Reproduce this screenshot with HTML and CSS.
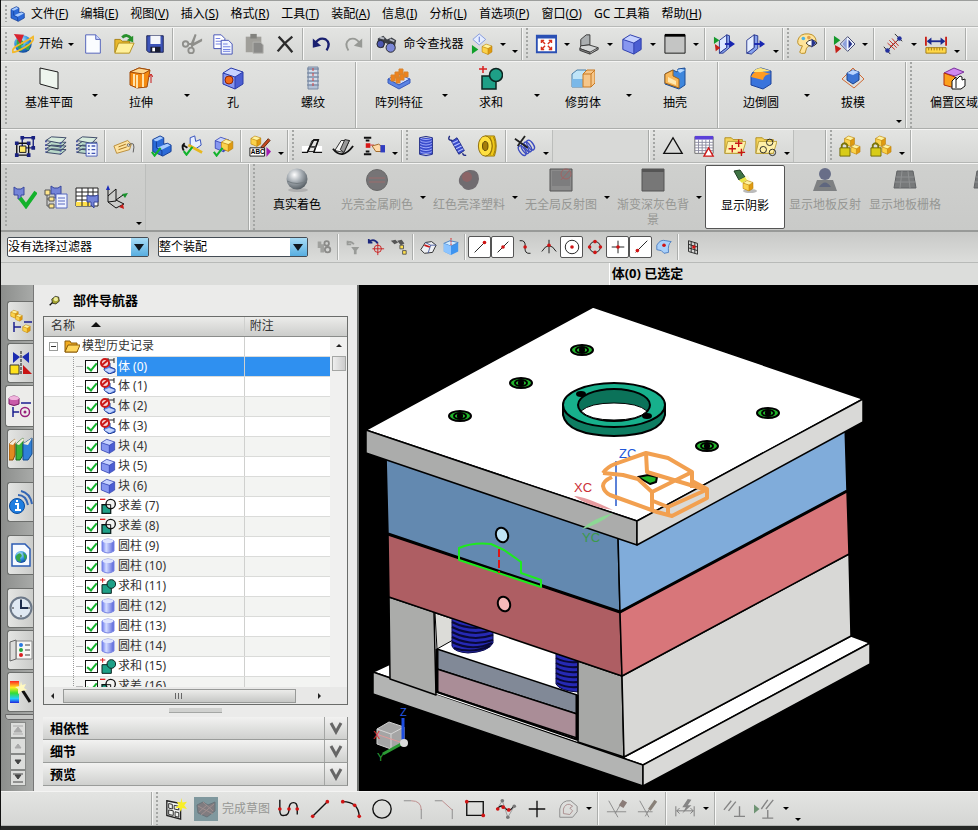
FILE: index.html
```
<!DOCTYPE html>
<html lang="zh-CN">
<head>
    <meta charset="UTF-8">
    <meta name="viewport" content="width=device-width, initial-scale=1.0">
    <title>部件导航器</title>
    <link rel="stylesheet" href="styles.css">
</head>
<body>
    <svg class="sprite" xmlns="http://www.w3.org/2000/svg" aria-hidden="true">
        <defs>
            <linearGradient id="g-blue" x1="0" y1="0" x2="1" y2="1"><stop offset="0" stop-color="#b8ccff"/><stop offset="1" stop-color="#3c55c8"/></linearGradient>
            <linearGradient id="g-cyl" x1="0" y1="0" x2="1" y2="0"><stop offset="0" stop-color="#6a78ee"/><stop offset=".35" stop-color="#d4dcff"/><stop offset="1" stop-color="#5562d8"/></linearGradient>
            <linearGradient id="g-rainbow" x1="0" y1="0" x2="0" y2="1"><stop offset="0" stop-color="#f22"/><stop offset=".3" stop-color="#fe2"/><stop offset=".55" stop-color="#3d3"/><stop offset=".8" stop-color="#2cf"/><stop offset="1" stop-color="#22d"/></linearGradient>
            <radialGradient id="g-ball" cx=".38" cy=".3" r=".7"><stop offset="0" stop-color="#fff"/><stop offset=".5" stop-color="#a5acb2"/><stop offset="1" stop-color="#5a6268"/></radialGradient>
            <radialGradient id="g-globe" cx=".4" cy=".3" r=".7"><stop offset="0" stop-color="#c8f0ff"/><stop offset=".6" stop-color="#2b8fe0"/><stop offset="1" stop-color="#114a9c"/></radialGradient>
        </defs>
        <symbol id="cube" viewBox="0 0 24 24"><path d="M2 7l8-5 12 4v12l-8 5-12-5z" fill="#4b5ed2"/><path d="M2 7l8-5 12 4-8 5z" fill="#c6d2ff"/><path d="M2 7l12 4v12L2 18z" fill="#8797f0"/><path d="M2 7l8-5 12 4v12l-8 5-12-5zM2 7l12 4 8-5M14 11v12" fill="none" stroke="#2c3caa"/></symbol>
        <symbol id="gold" viewBox="0 0 24 24"><path d="M2 7l8-5 12 4v12l-8 5-12-5z" fill="#e09a10"/><path d="M2 7l8-5 12 4-8 5z" fill="#fff3a0"/><path d="M2 7l12 4v12L2 18z" fill="#fbd24a"/><path d="M2 7l8-5 12 4v12l-8 5-12-5zM2 7l12 4 8-5M14 11v12" fill="none" stroke="#b07a08"/></symbol>
        <symbol id="tick" viewBox="0 0 24 24"><path d="M3 13l6 8L22 4" fill="none" stroke="#12b32c" stroke-width="4.500"/></symbol>
        <symbol id="part" viewBox="0 0 24 24"><path d="M3 5l8-4 4 2v7l4-1 4 2v7l-9 5L3 18z" fill="#2c6bd8"/><path d="M3 5l8-4 4 2-8 4zM8 14l11-5 4 2-10 5z" fill="#a8ccff"/><path d="M3 5l8-4 4 2v7l4-1 4 2v7l-9 5L3 18zM7 7v7l6 3v6" fill="none" stroke="#123a92"/></symbol>
        <symbol id="globe" viewBox="0 0 24 24"><circle cx="12" cy="12" r="9.500" fill="url(#g-globe)"/><path d="M5 8q5-3 7 1t-2 5l1 6Q4 17 5 8zM15 12l5 1-2 6-4-2z" fill="#37a64a"/><path d="M1 21q-2-4 8-9T23 4q2 5-8 11T1 21z" fill="none" stroke="#f3b92b" stroke-width="2"/><path d="M2 1l11 1-4 10z" fill="#d82430"/></symbol>
        <symbol id="new" viewBox="0 0 24 24"><path d="M4 2h11l5 5v15H4z" fill="#fafcff" stroke="#4a5bb8"/><path d="M15 2v5h5" fill="#cdd8ff" stroke="#4a5bb8"/></symbol>
        <symbol id="open" viewBox="0 0 24 24"><path d="M2 7h6l2 2h8v12H2z" fill="#e8b82c" stroke="#a58010"/><path d="M6 11h17l-5 11H2z" fill="#fff09a" stroke="#b08c18"/><path d="M10 5q5-5 10 1" fill="none" stroke="#27902c" stroke-width="3"/><path d="M22 3v7l-7-2z" fill="#27902c"/></symbol>
        <symbol id="save" viewBox="0 0 24 24"><path d="M3 3h18v18H5l-2-2z" fill="#3d54b8" stroke="#18204e"/><path d="M7 3h11v9H7z" fill="#f4f6fa"/><path d="M7 15h11v6H7z" fill="#181c30"/><path d="M9 16h3v4H9z" fill="#fff"/></symbol>
        <symbol id="cut" viewBox="0 0 24 24"><path d="M10 13L15 1l2 1-4 12zM11 12L23 6v3l-11 6z" fill="#8f8f8b"/><circle cx="5" cy="12" r="3" fill="none" stroke="#8f8f8b" stroke-width="2"/><circle cx="11" cy="19" r="3" fill="none" stroke="#8f8f8b" stroke-width="2"/><path d="M8 12h4v4" fill="none" stroke="#8f8f8b" stroke-width="2"/></symbol>
        <symbol id="copy" viewBox="0 0 24 24"><path d="M2 2h8l4 4v11H2z" fill="#fff" stroke="#3d4cb4"/><path d="M4 6h5M4 9h8M4 12h8" stroke="#6a7ae0"/><path d="M10 8h8l4 4v11H10z" fill="#f2f5ff" stroke="#3d4cb4"/><path d="M12 12h5M12 15h8M12 18h8M12 20h8" stroke="#6a7ae0"/></symbol>
        <symbol id="paste" viewBox="0 0 24 24"><path d="M3 4h17v17H3z" fill="#a09f9a"/><path d="M8 1h7v5H8z" fill="#82827e"/><path d="M11 10h8l3 3v9H11z" fill="#8a8a88" stroke="#b4b4b0"/></symbol>
        <symbol id="del" viewBox="0 0 24 24"><path d="M5 4q6 6 15 17M20 4Q11 11 4 20" fill="none" stroke="#2c2c2c" stroke-width="2.500"/></symbol>
        <symbol id="undo" viewBox="0 0 24 24"><path d="M4 12q5-8 12-5 6 4 1 12" fill="none" stroke="#1a2070" stroke-width="2.500"/><path d="M2 6v10l9-2z" fill="#1a2070"/></symbol>
        <symbol id="redo" viewBox="0 0 24 24"><path d="M20 12Q15 4 8 7q-6 4-1 12" fill="none" stroke="#979995" stroke-width="2"/><path d="M22 6v10l-9-2z" fill="#979995"/></symbol>
        <symbol id="find" viewBox="0 0 24 24"><path d="M2 6l6-3 4 4 5-2 5 3-2 10-6 2-1-8-3-1-2 5-6-1z" fill="#3c3f46"/><circle cx="5" cy="12" r="4" fill="#4d58b0" stroke="#222"/><circle cx="16" cy="16" r="5" fill="#7c88d8" stroke="#222"/><path d="M4 5l5 1M15 7l5 2" stroke="#b8bcc4" stroke-width="2"/></symbol>
        <symbol id="play" viewBox="0 0 24 24"><path d="M9 1l7 6-7 6-7-6z" fill="#e5edff" stroke="#8096dc"/><path d="M9 4v6" stroke="#5570d0"/><path d="M1 13l7 5-7 5z" fill="#11a02a"/><use href="#gold" x="11" y="11" width="13" height="13"/></symbol>
        <symbol id="fit" viewBox="0 0 24 24"><path d="M2 3h21v18H2z" fill="#fff" stroke="#2b50b4" stroke-width="2"/><path d="M2 3h21v3H2z" fill="#2b50b4"/><path d="M11 12L7 8m0 3V8h3M14 12l4-4m-3 0h3v3M11 14l-4 4m0-3v3h3M14 14l4 4m-3 0h3v-3" fill="none" stroke="#d8301c" stroke-width="1.500"/></symbol>
        <symbol id="view" viewBox="0 0 24 24"><path d="M3 14V7l6-5h4v11z" fill="#aaaeb0" stroke="#333"/><path d="M3 14l9-1 10 3-9 5-11-4z" fill="#d4d6d6" stroke="#333"/><path d="M2 17l11 4v2L2 19zM22 16v2l-9 5" fill="#888" stroke="#333"/></symbol>
        <symbol id="bg" viewBox="0 0 24 24"><path d="M1 2h22v20H1z" fill="#c4c5c4" stroke="#111"/><path d="M1 1h22v3H1z" fill="#000"/></symbol>
        <symbol id="clip1" viewBox="0 0 24 24"><path d="M7 8l8-6v14l-8 6z" fill="#dce8ff" stroke="#26348c"/><path d="M15 2l3 1v13l-7 6H7l8-6z" fill="#86a2ee" stroke="#26348c"/><path d="M1 4l6 4-6 4z" fill="#15992c"/><path d="M2 12l6 4-5 4z" fill="#c42018"/><path d="M13 12h6" stroke="#1725b0" stroke-width="2"/><path d="M18 8l6 4-6 4z" fill="#1725b0"/></symbol>
        <symbol id="clip2" viewBox="0 0 24 24"><path d="M11 2l4 1v14l-7 6-5-1 8-6z" fill="#86a2ee" stroke="#26348c"/><path d="M3 8l8-6v14l-8 6z" fill="#e6efff" stroke="#26348c"/><path d="M11 12h7" stroke="#1725b0" stroke-width="2"/><path d="M17 8l6 4-6 4z" fill="#1725b0"/></symbol>
        <symbol id="palette" viewBox="0 0 24 24"><path d="M2 8q2-8 12-7 8 1 8 9-1 5-8 4-3 1-4 8-5 1-6-1l3-7q-6 0-5-6z" fill="#ffe49a" stroke="#b88a1c"/><circle cx="8" cy="6" r="2" fill="#4ab4e8"/><circle cx="14" cy="5" r="2" fill="#e0a04a"/><path d="M11 11q6-7 12 0-6 7-12 0z" fill="#fff" stroke="#222"/><path d="M17 6l5 5-5 5z" fill="#26348c"/></symbol>
        <symbol id="eye" viewBox="0 0 24 24"><path d="M1 3l7 5-7 5z" fill="#15992c"/><path d="M2 13l7 4-6 5z" fill="#c42018"/><path d="M16 4l8 8-8 8-8-8z" fill="#f0f4ff" stroke="#333a66"/><path d="M15 6v12l-5-6z" fill="#8da0dc"/><path d="M17 7l4 5-4 5z" fill="#26348c"/></symbol>
        <symbol id="meas" viewBox="0 0 24 24"><path d="M2 15l7 8M14 1l8 8M5 20L20 5" stroke="#222"/><path d="M6 11l8 7M8 8l8 8M11 6l7 8M9 15l7-6" stroke="#c8261c"/><circle cx="6" cy="19" r="2.500" fill="#23309c"/><circle cx="19" cy="6" r="2.500" fill="#23309c"/></symbol>
        <symbol id="ruler" viewBox="0 0 24 24"><path d="M1 4v10M23 4v10" stroke="#c82018" stroke-width="2"/><path d="M3 9h18" stroke="#1b2a90" stroke-width="2"/><path d="M7 5L2 9l5 4zM17 5l5 4-5 4z" fill="#1b2a90"/><path d="M1 16h22v6H1z" fill="#ffd848" stroke="#a07812"/><path d="M4 16v3M7 16v3M10 16v3M13 16v3M16 16v3M19 16v3" stroke="#a07812"/></symbol>

        <symbol id="plane" viewBox="0 0 24 24"><path d="M3 2l18 4v17L3 18z" fill="#eef5ee" stroke="#1c1c1c"/></symbol>
        <symbol id="extrude" viewBox="0 0 24 24"><path d="M1 6l9-4 11 2-3 17-10 1-7-3z" fill="#f48a10" stroke="#a04a08"/><path d="M1 6l9-4 11 2-7 4z" fill="#ffd68c" stroke="#a04a08"/><path d="M5 8v12M8 9v13M14 8v13" stroke="#ffe2a8" stroke-width="2"/><path d="M22 9v8M20 11l2-3 2 3" fill="none" stroke="#c81818"/></symbol>
        <symbol id="hole" viewBox="0 0 24 24"><use href="#cube"/><circle cx="8" cy="14" r="4" fill="#f26a18" stroke="#8c2408"/></symbol>
        <symbol id="thread" viewBox="0 0 24 24"><path d="M7 1h10v22H7z" fill="#b4c2d6" stroke="#7c8ca4"/><path d="M6 3h12M6 7h12M6 11h12M6 15h12M6 19h12" stroke="#6c7e9a"/><path d="M8 5h8M8 9h8M8 13h8M8 17h8" stroke="#eef4fc"/><path d="M12 2v20" stroke="#d04040" stroke-dasharray="3 2"/></symbol>
        <symbol id="pattern" viewBox="0 0 24 24"><path d="M1 13l10-5 12 5-11 6z" fill="#cfdfff" stroke="#3a5cbc"/><path d="M1 13v4l11 6 11-6v-4l-11 6z" fill="#5b84e4" stroke="#3a5cbc"/><path d="M4 9h4v6H4zM9 11h4v6H9zM8 6h4v6H8zM13 8h4v6h-4zM12 3h4v5h-4zM17 6h4v5h-4z" fill="#f0821c" stroke="#d8842c"/></symbol>
        <symbol id="unite" viewBox="0 0 24 24"><path d="M3 10h14v13H3z" fill="#1ea087" stroke="#0d2420" stroke-width="1.500"/><circle cx="17" cy="9" r="6.500" fill="#1ea087" stroke="#0d2420" stroke-width="1.500"/><path d="M4 0v7M0 3h8" stroke="#d82020" stroke-width="1.500"/></symbol>
        <symbol id="minus" viewBox="0 0 24 24"><path d="M3 10h13v13H3z" fill="#1ea087" stroke="#0d2420" stroke-width="2"/><circle cx="16" cy="9" r="7" fill="#f4f4f2" stroke="#111" stroke-width="2"/><path d="M3 10h13v8" fill="none" stroke="#111" stroke-width="1.500"/><path d="M0 2h8" stroke="#d82020" stroke-width="2"/></symbol>
        <symbol id="trim" viewBox="0 0 24 24"><path d="M1 8l5-4h9v14l-3 3H1z" fill="#bfe4f8" stroke="#4a7ea8"/><path d="M1 13h11v8H1z" fill="#7ab8e8"/><path d="M12 8l4-4h8v13l-4 4h-8z" fill="#f5c68a" stroke="#c87820"/><path d="M12 8h8v13M20 8l4-4" fill="none" stroke="#c87820"/></symbol>
        <symbol id="shell" viewBox="0 0 24 24"><path d="M2 8l8-4 4 2 1-3 7-1v17l-6 4L2 18z" fill="#3e86dc" stroke="#1c4c94"/><path d="M14 4l4-1 4 1-5 3z" fill="#b4d8ff"/><path d="M2 8l8-4v6l6 3v9L2 17z" fill="#f8b85a" stroke="#a86410"/><path d="M5 11l8 4v4l-8-3z" fill="#ffe8b0"/></symbol>
        <symbol id="blend" viewBox="0 0 24 24"><path d="M2 10q2-7 10-8l10 3v13l-8 5-12-4z" fill="#3a74dc" stroke="#1c439c"/><path d="M2 11q2-6 9-6l11 3q-7 0-8 6z" fill="#ff9c20"/><path d="M4 6q3-4 8-4l10 3-11 1z" fill="#ffe678"/></symbol>
        <symbol id="draft" viewBox="0 0 24 24"><path d="M12 2L1 13l12 9 10-9z" fill="none" stroke="#d06a34"/><path d="M6 7l6-3 6 2v8l-6 4-6-4z" fill="#3c74d4" stroke="#1a428c"/><path d="M6 7l6-3 6 2-6 3z" fill="#b8d4ff"/></symbol>
        <symbol id="offset" viewBox="0 0 24 24"><path d="M2 7l10-5 10 4-9 4z" fill="#d088f0" stroke="#7a309c"/><path d="M2 7l11 4v11L2 19z" fill="#fba01c" stroke="#b02c0c"/><path d="M10 15l4-4v3l4-4 2 1v3l3-1v7l-4 3h-9z" fill="#fff" stroke="#111"/><path d="M14 14v8" stroke="#111"/></symbol>

        <symbol id="node" viewBox="0 0 24 24"><path d="M9 3h12v11H9z" fill="none" stroke="#1a2280" stroke-width="1.500"/><path d="M3 9h13v13H3z" fill="none" stroke="#111" stroke-width="1.500"/><path d="M6 12h7v7H6z" fill="#ffe96a" stroke="#111"/><path d="M7 1h4v4H7zM19 1h4v4h-4zM19 12h4v4h-4zM1 7h4v4H1zM14 7h4v4h-4zM1 20h4v4H1zM14 20h4v4h-4z" fill="#1a2280"/></symbol>
        <symbol id="layers" viewBox="0 0 24 24"><path d="M1 19l6-4 16 1-6 5zM1 15l6-4 16 1-6 5zM1 11l6-4 16 1-6 5z" fill="#b8d8c8" stroke="#333f60"/><path d="M1 6l6-4 16 1-6 6z" fill="#d8ecde" stroke="#333f60"/><path d="M1 6v13M17 8v13" stroke="#4a54a0" stroke-width="2" stroke-dasharray="2 2"/></symbol>
        <symbol id="layset" viewBox="0 0 24 24"><use href="#layers"/><path d="M11 9h12v14H11z" fill="#f2f6ff" stroke="#4456b4"/><path d="M13 12h2M13 16h2M13 20h2M17 12h4M17 16h4M17 20h4" stroke="#4456b4" stroke-width="1.500"/></symbol>
        <symbol id="tag" viewBox="0 0 24 24"><path d="M1 12l15-6 4 4-2 6-14 4z" fill="#ffe3a0" stroke="#b88a34"/><path d="M6 13l8-3M6 16l9-3" stroke="#a06c18"/><circle cx="17" cy="11" r="1.500" fill="#fff" stroke="#666"/><path d="M17 11q8-6 5 8" fill="none" stroke="#555"/></symbol>
        <symbol id="chk1" viewBox="0 0 24 24"><use href="#part"/><use href="#tick" x="0" y="12" width="13" height="12"/></symbol>
        <symbol id="chk2" viewBox="0 0 24 24"><path d="M10 3l5-2 1 6 5-2 1 6-6 4-6-4z" fill="#e8efff" stroke="#2c48b8"/><path d="M8 11l15 8" stroke="#e8b820" stroke-width="3"/><path d="M4 9q-4 3-1 8M2 11l5 3" fill="none" stroke="#111" stroke-width="2"/><use href="#tick" x="1" y="11" width="13" height="12"/></symbol>
        <symbol id="chk3" viewBox="0 0 24 24"><use href="#cube" x="2" y="0" width="18" height="20"/><use href="#gold" x="9" y="1" width="15" height="20"/><use href="#tick" x="0" y="12" width="13" height="12"/></symbol>
        <symbol id="cam1" viewBox="0 0 24 24"><path d="M1 12h9l-3 7H1zM17 12h6v7h-8z" fill="#fff"/><path d="M12 6h7l-5 12H7z" fill="#e4e4e2" stroke="#222"/><path d="M1 19h6l7-14h5l-5 14h9" fill="none" stroke="#111" stroke-width="1.500"/><path d="M11 13h5" stroke="#444" stroke-width="2"/></symbol>
        <symbol id="cam2" viewBox="0 0 24 24"><path d="M3 17l7-11h9l-6 13z" fill="#f4f4f2" stroke="#222"/><path d="M14 5l5 1-6 13-4-3z" fill="#999" stroke="#222"/><path d="M1 15q10 13 22-3" fill="none" stroke="#111" stroke-width="2"/></symbol>
        <symbol id="hand" viewBox="0 0 24 24"><path d="M1 3h8M1 21h8M3 6h4M3 18h4" stroke="#111" stroke-width="2"/><path d="M3 9h5v5H3z" fill="#d81818"/><path d="M8 11h4" stroke="#d81818"/><path d="M10 12l7-2 3 2v6h-6z" fill="#ffd9a8" stroke="#9c6420"/><path d="M19 11h5v8h-5z" fill="#2f3cc0"/></symbol>
        <symbol id="spring1" viewBox="0 0 24 24"><path d="M5 3h14v18H5z" fill="#3a4ccc"/><path d="M5 3q7 4 14 0M5 6q7 4 14 0M5 9q7 4 14 0M5 12q7 4 14 0M5 15q7 4 14 0M5 18q7 4 14 0M5 21q7 4 14 0" fill="none" stroke="#a8b4ff"/><path d="M5 3q7-3 14 0v18q-7 3-14 0z" fill="none" stroke="#1c2780"/></symbol>
        <symbol id="spring2" viewBox="0 0 24 24"><path d="M6 7l6-4 8 14-6 4z" fill="#3a4ccc" stroke="#1c2780"/><path d="M7 9l6-3M9 12l6-3M11 15l6-3M13 18l6-3" stroke="#b4c0ff" stroke-width="1.500"/><path d="M7 6Q1 6 4 1M18 20q1 3 4 2" fill="none" stroke="#1c2780" stroke-width="1.500"/></symbol>
        <symbol id="spring3" viewBox="0 0 24 24"><path d="M9 1h10q4 11 0 22H9z" fill="#f0c818" stroke="#9a7808"/><path d="M14 2q5 10 0 20M18 2q4 10 0 20" fill="none" stroke="#9a7808"/><ellipse cx="9" cy="12" rx="7.500" ry="11" fill="#ffe040" stroke="#8a6804"/><ellipse cx="9" cy="12" rx="3" ry="5" fill="#a57d08" stroke="#5a4404"/></symbol>
        <symbol id="spring4" viewBox="0 0 24 24"><g fill="none" stroke="#3c4cc0" stroke-width="1.500"><ellipse cx="9" cy="17" rx="3" ry="6" transform="rotate(-35 9 17)"/><ellipse cx="12" cy="15" rx="3" ry="6" transform="rotate(-35 12 15)"/><ellipse cx="15" cy="13" rx="3" ry="6" transform="rotate(-35 15 13)"/><ellipse cx="18" cy="11" rx="3" ry="6" transform="rotate(-35 18 11)"/></g><path d="M1 4l14 10M12 1L4 12" stroke="#222" stroke-width="2"/></symbol>
        <symbol id="tri" viewBox="0 0 24 24"><path d="M12 3l10 17H2z" fill="none" stroke="#111" stroke-width="1.500"/></symbol>
        <symbol id="sheet" viewBox="0 0 24 24"><path d="M2 2h20v18H2z" fill="#fff" stroke="#666"/><path d="M2 1h20v4H2z" fill="#5b40d8"/><path d="M2 8h20M2 11h20M2 14h20M2 17h20M6 5v15M10 5v15M14 5v15M18 5v15" stroke="#8a8aa0"/><path d="M17 14l5 9H12z" fill="#fff" stroke="#d01818" stroke-width="1.500"/></symbol>
        <symbol id="fold1" viewBox="0 0 24 24"><path d="M1 3h7l2 2h10v15H1z" fill="#f4d45c" stroke="#b08c18"/><path d="M4 7h20l-4 13H1z" fill="#fff0a8" stroke="#b89c38"/><path d="M12 9h8M16 5v8M5 15h8M9 11v8M15 19h8M19 15v8" stroke="#c81414" stroke-width="1.500"/></symbol>
        <symbol id="fold2" viewBox="0 0 24 24"><path d="M1 3h7l2 2h10v15H1z" fill="#f4d45c" stroke="#b08c18"/><path d="M4 7h20l-4 13H1z" fill="#fff0a8" stroke="#b89c38"/><g fill="none" stroke="#222"><circle cx="16" cy="8" r="3.500"/><circle cx="9" cy="16" r="3.500"/><circle cx="19" cy="19" r="3.500"/></g></symbol>
        <symbol id="lock" viewBox="0 0 24 24"><use href="#gold" x="5" y="0" width="13" height="13"/><use href="#gold" x="12" y="9" width="12" height="13"/><path d="M3 15v-4q3-4 6 0v4" fill="none" stroke="#7a7408" stroke-width="2"/><path d="M1 14h11v9H1z" fill="#d8cc18" stroke="#6c6608"/></symbol>

        <symbol id="nav1" viewBox="0 0 24 24"><path d="M1 2l3 2h4l3-2v8H8v4H5v-4H1z" fill="#7484d8" stroke="#38469c"/><path d="M7 13l6 8L23 7" fill="none" stroke="#14b22c" stroke-width="4"/></symbol>
        <symbol id="nav2" viewBox="0 0 24 24"><path d="M7 1l3 2h4l3-2v8h-4v4h-2V9H7z" fill="#7484d8" stroke="#38469c"/><path d="M3 8v13h4M3 14h4" fill="none" stroke="#555"/><path d="M1 5h5v5H1zM5 12h5v4H5zM5 19h5v4H5z" fill="#ffe68a" stroke="#555"/><path d="M12 9h11v14H12z" fill="#eef2ff" stroke="#5668c0"/><path d="M14 13h7M14 16h7M14 19h7" stroke="#5668c0"/></symbol>
        <symbol id="nav3" viewBox="0 0 24 24"><path d="M1 3h22v18H1z" fill="#fff" stroke="#222"/><path d="M1 17h14v4H1z" fill="#ffe04a"/><path d="M1 7h22M1 11h22M1 15h22M7 3v18M13 3v18M18 3v18" stroke="#222"/><path d="M12 10l3 1h5l3-1v7h-4v6l-3-3v-3h-4z" fill="#7484d8" stroke="#38469c"/></symbol>
        <symbol id="nav4" viewBox="0 0 24 24"><path d="M2 4v13M2 11l8-7v12l-8 1 8 6 8-4-8-4 7-5" fill="none" stroke="#111"/><path d="M2 0l2 5H0z" fill="#1c2cb8"/><path d="M22 8l-6 1 3 4z" fill="#18902c"/><path d="M18 24l-5-2 4-3z" fill="#c81c18"/></symbol>
        <symbol id="ball" viewBox="0 0 24 24"><ellipse cx="13" cy="22" rx="10" ry="2" fill="#b0b0b0"/><circle cx="12" cy="11" r="10.500" fill="url(#g-ball)"/><path d="M2 13q10 5 20 0" fill="none" stroke="#737b80"/></symbol>
        <symbol id="ball2" viewBox="0 0 24 24"><circle cx="12" cy="12" r="10.500" fill="#767476" stroke="#696969"/><path d="M4 10h16M4 14h16" stroke="#9c6c6c"/></symbol>
        <symbol id="ball3" viewBox="0 0 24 24"><path d="M12 2q10-1 10 9-1 10-10 11-5 0-7-4-4-2-3-7 2-7 10-9z" fill="#706c70"/><circle cx="10" cy="9" r="5" fill="#8c6466"/></symbol>
        <symbol id="sq1" viewBox="0 0 24 24"><path d="M1 1h22v22H1z" fill="#8b8b8b" stroke="#555"/><path d="M3 3h18v15H3z" fill="#7d7d7e"/><circle cx="17" cy="6" r="5" fill="none" stroke="#a06464"/><path d="M20 3l-8 9" stroke="#a06464"/></symbol>
        <symbol id="sq2" viewBox="0 0 24 24"><path d="M1 1h22v22H1z" fill="#777" stroke="#555"/><path d="M1 1h22v3H1z" fill="#555"/></symbol>
        <symbol id="shadow" viewBox="0 0 24 24"><path d="M9 10l6-4 7 15-9 1z" fill="#fffbe0"/><path d="M1 2l6-1 5 7-6 3z" fill="#3f7444" stroke="#1e3c22"/><path d="M6 11l6-3 2 3-5 3z" fill="#e8e444"/><ellipse cx="17" cy="22" rx="7" ry="2" fill="#bbb"/><use href="#gold" x="9" y="10" width="12" height="13"/></symbol>
        <symbol id="user" viewBox="0 0 24 24"><path d="M4 12h16l4 11H0z" fill="#7e8082"/><circle cx="12" cy="6" r="6" fill="#686e88"/><path d="M6 19q6-9 12 0z" fill="#5f667e"/></symbol>
        <symbol id="grid" viewBox="0 0 24 24"><path d="M4 3h16l3 17H1z" fill="#77797a" stroke="#606264"/><path d="M3 9h18M2 14h20M9 3L7 20M15 3l2 17" stroke="#8f9192"/></symbol>

        <symbol id="s-rel" viewBox="0 0 20 20"><path d="M3 4h4v3h3v9H6v-5H3z" fill="#a0a19e"/><circle cx="13" cy="6" r="2.500" fill="none" stroke="#8a8a88" stroke-width="2"/><circle cx="14" cy="13" r="3" fill="none" stroke="#8a8a88" stroke-width="2"/></symbol>
        <symbol id="s-undo" viewBox="0 0 20 20"><path d="M3 6q4-4 8 1M4 3v4h4" fill="none" stroke="#999b98" stroke-width="2"/><path d="M8 10h9l-3 4v4h-3v-4z" fill="#999b98"/></symbol>
        <symbol id="s-target" viewBox="0 0 20 20"><path d="M2 4q6-4 10 2M2 1v4h4" fill="none" stroke="#1b267c" stroke-width="2"/><circle cx="12" cy="12" r="4" fill="none" stroke="#c81818"/><path d="M12 6v13M6 12h13" stroke="#c81818"/></symbol>
        <symbol id="s-find" viewBox="0 0 20 20"><path d="M1 3l5-1 3 3-4 2zM8 3l5-1 3 4-4 2z" fill="#555"/><path d="M11 8h4v4h-4zM14 14h4v4h-4z" fill="#ffe04a" stroke="#555"/></symbol>
        <symbol id="s-eraser" viewBox="0 0 20 20"><path d="M2 13l5-8 7-1 5 4-4 8-9 1z" fill="#eef0f4" stroke="#222"/><path d="M7 5l6 3-3 9M13 8h6" fill="none" stroke="#4a5a9c"/><path d="M6 8l6 2" stroke="#c81818" stroke-width="2"/></symbol>
        <symbol id="s-box" viewBox="0 0 20 20"><path d="M2 6l7-3 9 2v10l-8 4-8-4z" fill="#3d94f0"/><path d="M2 6l7-3 9 2-8 4z" fill="#d4ecff" stroke="#4a80c0"/><path d="M2 6l8 3v10l-8-4z" fill="#8cc4ff"/><path d="M10 0v8" stroke="#d81818" stroke-dasharray="2 1"/></symbol>
        <symbol id="s-end" viewBox="0 0 20 20"><path d="M4 16L15 5" stroke="#111"/><circle cx="15" cy="5" r="2" fill="#d01414"/></symbol>
        <symbol id="s-mid" viewBox="0 0 20 20"><path d="M4 16L16 4" stroke="#111"/><circle cx="10" cy="10" r="2" fill="#d01414"/></symbol>
        <symbol id="s-curve" viewBox="0 0 20 20"><path d="M3 3q7-1 6 7t6 7" fill="none" stroke="#111"/><circle cx="9" cy="10" r="2" fill="#d01414"/></symbol>
        <symbol id="s-cross" viewBox="0 0 20 20"><path d="M10 2v15M2 15q8-13 16 0" fill="none" stroke="#111"/><circle cx="10" cy="8" r="2" fill="#d01414"/></symbol>
        <symbol id="s-center" viewBox="0 0 20 20"><circle cx="10" cy="10" r="7.500" fill="none" stroke="#111"/><circle cx="10" cy="10" r="2" fill="#d01414"/></symbol>
        <symbol id="s-quad" viewBox="0 0 20 20"><circle cx="10" cy="10" r="6" fill="none" stroke="#111"/><g fill="#d01414"><circle cx="10" cy="4" r="2"/><circle cx="10" cy="16" r="2"/><circle cx="4" cy="10" r="2"/><circle cx="16" cy="10" r="2"/></g></symbol>
        <symbol id="s-point" viewBox="0 0 20 20"><path d="M10 3v14M3 10h14" stroke="#111"/><circle cx="10" cy="10" r="2" fill="#d01414"/></symbol>
        <symbol id="s-on" viewBox="0 0 20 20"><path d="M4 16L17 3" stroke="#111"/><circle cx="6" cy="14" r="2" fill="#d01414"/></symbol>
        <symbol id="s-face" viewBox="0 0 20 20"><path d="M2 8q4-7 10-5l6 1q-4 3-3 12l-5 1q-2-4-8-4z" fill="#a8d0fa" stroke="#4a7cc0"/><circle cx="10" cy="8" r="2" fill="#d01414"/></symbol>
        <symbol id="s-grid" viewBox="0 0 20 20"><path d="M5 3l10 3v12L5 15zM5 7l10 3M5 11l10 3M8 4v12M12 5v12" fill="none" stroke="#222"/><circle cx="11" cy="10" r="2" fill="#d01414"/></symbol>

        <symbol id="t-asm" viewBox="0 0 24 24"><use href="#gold" x="1" y="0" width="9" height="10"/><use href="#gold" x="6" y="4" width="8" height="9"/><path d="M5 13v10M5 18h7M15 13h8" stroke="#1b1f90" stroke-width="1.500"/><use href="#gold" x="13" y="15" width="9" height="9"/></symbol>
        <symbol id="t-con" viewBox="0 0 24 24"><path d="M4 1l7 5-7 6zM20 1l-7 5 7 6z" fill="#1c2cb0"/><path d="M12 0v24" stroke="#111" stroke-dasharray="3 1"/><path d="M1 14h9v9H1z" fill="#ffe21c" stroke="#333"/><path d="M14 14v9h9z" fill="#c81414"/></symbol>
        <symbol id="t-part" viewBox="0 0 24 24"><path d="M1 4q5-4 10 0v6q-5 3-10 0z" fill="#c85aa8" stroke="#7a1c64"/><ellipse cx="6" cy="4" rx="5" ry="2" fill="#f0b4dc"/><path d="M13 9h10M5 13v10M5 18h6" stroke="#1b1f90" stroke-width="1.500"/><circle cx="17" cy="18" r="4.500" fill="none" stroke="#98207c" stroke-width="1.500"/><circle cx="17" cy="18" r="1.500" fill="#98207c"/></symbol>
        <symbol id="t-books" viewBox="0 0 24 24"><path d="M0 7l6-5v16l-2 5H0z" fill="#e08a20" stroke="#8c4c08"/><path d="M7 7l7-6v17l-3 5H7z" fill="#36b43c" stroke="#14641c"/><path d="M14 7l9-6v16l-4 6h-5z" fill="#2f80d8" stroke="#144a8c"/><path d="M0 7l6-5 2 1-4 5zM7 7l7-6 1 2-5 5zM14 7l9-6-4 7z" fill="#f4ecd8"/></symbol>
        <symbol id="t-info" viewBox="0 0 24 24"><circle cx="8" cy="16" r="7.500" fill="#1f7ee0" stroke="#0d4c9c"/><path d="M6 14h3v6M6 20h6M8 10v2" fill="none" stroke="#fff" stroke-width="2"/><path d="M9 5q8 0 10 10M12 1q9 2 11 13" fill="none" stroke="#3466b4" stroke-width="2"/></symbol>
        <symbol id="t-web" viewBox="0 0 24 24"><path d="M3 1h13l5 5v17H3z" fill="#f6faff" stroke="#2c5cb4" stroke-width="1.500"/><circle cx="12" cy="14" r="6" fill="url(#g-globe)"/><path d="M7 13q3-4 5-2t-1 4l1 4q-6-1-5-6zM14 9l4 4-2 5z" fill="#37a64a"/></symbol>
        <symbol id="t-clock" viewBox="0 0 24 24"><circle cx="12" cy="12" r="10.500" fill="#dfe8f2" stroke="#6c7888" stroke-width="2"/><path d="M12 3v2M12 19v2M3 12h2M19 12h2" stroke="#333"/><path d="M12 4v8h7" fill="none" stroke="#1c2c4c" stroke-width="2"/></symbol>
        <symbol id="t-role" viewBox="0 0 24 24"><path d="M7 3h16v18H7z" fill="#f6f6f4" stroke="#888"/><path d="M1 4l6-2v19l-6 2z" fill="#dcdcda" stroke="#666"/><circle cx="12" cy="7" r="2" fill="#2878e0"/><circle cx="12" cy="12" r="2" fill="#28a83c"/><circle cx="12" cy="17" r="2" fill="#d82020"/><path d="M16 7h5M16 12h5M16 17h5" stroke="#444"/></symbol>
        <symbol id="t-vis" viewBox="0 0 24 24"><path d="M1 1h9v22H1z" fill="url(#g-rainbow)"/><path d="M12 8l9 14" stroke="#111" stroke-width="3"/><path d="M12 1l1 4 4-1-2 4 3 2-5 1-4 3V9L6 7l5-1z" fill="#fff8c0"/></symbol>

        <symbol id="n-pin" viewBox="0 0 16 16"><path d="M1 15l5-5" stroke="#111" stroke-width="2"/><path d="M4 6l5-4 5 1 1 6-5 4-5-1z" fill="#a5a430" stroke="#111"/><circle cx="10" cy="6" r="3" fill="#eeeca0"/></symbol>
        <symbol id="n-folder" viewBox="0 0 16 16"><path d="M1 3h5l1 2h6v9H1z" fill="#f2ac20" stroke="#8c5c08"/><path d="M4 7h12l-3 7H1z" fill="#ffd65c" stroke="#8c5c08"/></symbol>
        <symbol id="n-body" viewBox="0 0 16 16"><path d="M5 8l5-3v4l5 2v3l-6 2-5-4z" fill="#5c84e4" stroke="#1c3a94"/><path d="M4 12l5-2 6 2-5 3z" fill="#c4d6ff"/><path d="M8 2h6M8 0v5M14 0v5" stroke="#222"/><circle cx="5" cy="5" r="4" fill="#f4d8d8" stroke="#cc1818" stroke-width="2"/><path d="M2 7l6-5" stroke="#cc1818" stroke-width="2"/></symbol>
        <symbol id="n-cyl" viewBox="0 0 16 16"><path d="M2 3q6-4 12 0v10q-6 4-12 0z" fill="url(#g-cyl)" stroke="#7a86e4"/><ellipse cx="8" cy="3" rx="5.500" ry="2" fill="#dfe5ff"/></symbol>

        <symbol id="b-task" viewBox="0 0 24 24"><path d="M2 3l15 3v17L2 19z" fill="#f0f2f0" stroke="#222" stroke-width="1.500"/><path d="M4 6l4 1v5l-4-1zM10 8l5 1v4l-5-1zM4 13l5 1v5l-5-1zM11 15l4 1v5l-4-1z" fill="none" stroke="#222"/><path d="M18 0l1 5 5-1-3 4 3 4-5-1-2 4-1-4-5 0 4-3-2-4 4 1z" fill="#f8ee28"/></symbol>
        <symbol id="b-finish" viewBox="0 0 24 24"><path d="M0 0h24v24H0z" fill="#7f989e"/><path d="M3 8l6-3 5 3 7-3v9l-8 6-9-4z" fill="#807c80" stroke="#68747a"/><path d="M4 9l15 8M9 5l10 9M20 7L7 18M13 8l-8 7" stroke="#a09090"/></symbol>
        <symbol id="b-profile" viewBox="0 0 24 24"><path d="M2 2v12q0 6 5 5 5 0 5-7 0-7 5-7 4 0 4 6v7" fill="none" stroke="#111" stroke-width="1.500"/><g fill="#d01414"><circle cx="2" cy="12" r="2"/><circle cx="12" cy="12" r="2"/><circle cx="21" cy="12" r="2"/></g></symbol>
        <symbol id="b-line" viewBox="0 0 24 24"><path d="M4 20L20 4" stroke="#111" stroke-width="1.500"/><circle cx="4" cy="20" r="2" fill="#d01414"/><circle cx="20" cy="4" r="2" fill="#d01414"/></symbol>
        <symbol id="b-arc" viewBox="0 0 24 24"><path d="M3 4q17 0 18 16" fill="none" stroke="#111" stroke-width="1.500"/><g fill="#d01414"><circle cx="3" cy="4" r="2"/><circle cx="16" cy="8" r="2"/><circle cx="21" cy="20" r="2"/></g></symbol>
        <symbol id="b-circle" viewBox="0 0 24 24"><circle cx="12" cy="12" r="10" fill="none" stroke="#111" stroke-width="1.500"/></symbol>
        <symbol id="b-fillet" viewBox="0 0 24 24"><path d="M2 3h8M21 12v11" stroke="#888"/><path d="M10 3q11 0 11 10" fill="none" stroke="#b88"/></symbol>
        <symbol id="b-chamfer" viewBox="0 0 24 24"><path d="M2 3h8M21 12v11" stroke="#888"/><path d="M10 3l11 10" fill="none" stroke="#b88"/></symbol>
        <symbol id="b-rect" viewBox="0 0 24 24"><path d="M3 4h18v15H3z" fill="none" stroke="#111" stroke-width="1.500"/><circle cx="3" cy="4" r="2" fill="#d01414"/><circle cx="21" cy="19" r="2" fill="#d01414"/></symbol>
        <symbol id="b-spline" viewBox="0 0 24 24"><path d="M2 12q5-6 9-1t9-1" fill="none" stroke="#111" stroke-width="1.500"/><path d="M2 12L8 3l6 18 7-12" fill="none" stroke="#999"/><g fill="#777"><circle cx="8" cy="3" r="2"/><circle cx="14" cy="21" r="2"/><circle cx="21" cy="9" r="2"/></g><g fill="#d01414"><circle cx="3" cy="12" r="2"/><circle cx="9" cy="10" r="2"/><circle cx="15" cy="13" r="2"/></g></symbol>
        <symbol id="b-point" viewBox="0 0 24 24"><path d="M12 3v18M3 12h18" stroke="#111" stroke-width="1.500"/></symbol>
        <symbol id="b-offset" viewBox="0 0 24 24"><path d="M3 21v-9q2-10 12-9l7 6v6l-5 6z" fill="none" stroke="#888"/><path d="M7 17v-5q2-6 7-5l3 2-3 2 3 3-3 4z" fill="none" stroke="#aa8c8c"/></symbol>
        <symbol id="b-trim" viewBox="0 0 24 24"><path d="M3 3l10 18M1 15h21M10 17L17 5" stroke="#888" fill="none"/><path d="M14 8l4-6 5 3-4 6z" fill="#8a7c78"/></symbol>
        <symbol id="b-extend" viewBox="0 0 24 24"><path d="M3 3l10 18M1 15h16M9 20l4-7" stroke="#888" fill="none"/><path d="M12 12l7-10 3 2-7 10z" fill="#888078"/></symbol>
        <symbol id="b-dim" viewBox="0 0 24 24"><path d="M2 9v11M22 9v11M3 14h18M6 11l-3 3 3 3M18 11l3 3-3 3" fill="none" stroke="#777"/><path d="M15 1l-6 9h4l-4 7 10-9h-4l4-6z" fill="#858585"/></symbol>
        <symbol id="b-para" viewBox="0 0 24 24"><path d="M1 13L9 3M6 14l8-10M12 20h12M18 9v11" fill="none" stroke="#858585" stroke-width="1.500"/></symbol>
        <symbol id="b-show" viewBox="0 0 24 24"><path d="M0 7l6 5-6 5z" fill="#6f9474"/><path d="M8 12l7-10M13 12l8-10M9 22h12M15 13v9" fill="none" stroke="#858585" stroke-width="1.500"/></symbol>
    </svg>

    <nav class="menubar">
        <span class="grip"></span>
        <svg class="logo"><use href="#part"/></svg>
        <a href="#">文件(<u>F</u>)</a>
        <a href="#">编辑(<u>E</u>)</a>
        <a href="#">视图(<u>V</u>)</a>
        <a href="#">插入(<u>S</u>)</a>
        <a href="#">格式(<u>R</u>)</a>
        <a href="#">工具(<u>T</u>)</a>
        <a href="#">装配(<u>A</u>)</a>
        <a href="#">信息(<u>I</u>)</a>
        <a href="#">分析(<u>L</u>)</a>
        <a href="#">首选项(<u>P</u>)</a>
        <a href="#">窗口(<u>O</u>)</a>
        <a href="#">GC 工具箱</a>
        <a href="#">帮助(<u>H</u>)</a>
    </nav>

    <div class="toolbar">
        <span class="grip"></span>
        <button class="tool start"><svg><use href="#globe"/></svg>开始<i class="arrow"></i></button>
        <button class="tool" aria-label="新建"><svg><use href="#new"/></svg></button>
        <button class="tool" aria-label="打开"><svg><use href="#open"/></svg></button>
        <button class="tool" aria-label="保存"><svg><use href="#save"/></svg></button>
        <span class="sep"></span>
        <button class="tool" aria-label="剪切" disabled><svg><use href="#cut"/></svg></button>
        <button class="tool" aria-label="复制"><svg><use href="#copy"/></svg></button>
        <button class="tool" aria-label="粘贴" disabled><svg><use href="#paste"/></svg></button>
        <button class="tool" aria-label="删除"><svg><use href="#del"/></svg></button>
        <span class="sep"></span>
        <button class="tool" aria-label="撤消"><svg><use href="#undo"/></svg></button>
        <button class="tool" aria-label="重做" disabled><svg><use href="#redo"/></svg></button>
        <span class="sep"></span>
        <button class="tool finder"><svg><use href="#find"/></svg>命令查找器</button>
        <button class="tool" aria-label="重复命令"><svg><use href="#play"/></svg></button>
        <span class="drop"></span>
        <span class="more"></span>
        <span class="grip edge"></span>
        <button class="tool" aria-label="适合窗口"><svg><use href="#fit"/></svg></button>
        <span class="drop"></span>
        <button class="tool" aria-label="定向视图"><svg><use href="#view"/></svg></button>
        <span class="drop"></span>
        <button class="tool" aria-label="着色"><svg><use href="#cube"/></svg></button>
        <span class="drop"></span>
        <button class="tool" aria-label="背景"><svg><use href="#bg"/></svg></button>
        <span class="drop"></span>
        <span class="sep"></span>
        <button class="tool" aria-label="编辑截面"><svg><use href="#clip1"/></svg></button>
        <button class="tool" aria-label="剪切截面"><svg><use href="#clip2"/></svg></button>
        <span class="more"></span>
        <span class="grip edge"></span>
        <button class="tool" aria-label="对象显示"><svg><use href="#palette"/></svg></button>
        <span class="sep"></span>
        <button class="tool" aria-label="显示和隐藏"><svg><use href="#eye"/></svg></button>
        <span class="drop"></span>
        <span class="sep"></span>
        <button class="tool" aria-label="测量"><svg><use href="#meas"/></svg></button>
        <span class="drop"></span>
        <button class="tool" aria-label="测量距离"><svg><use href="#ruler"/></svg></button>
        <span class="more"></span>
        <span class="sep"></span>
    </div>

    <div class="ribbon">
        <span class="grip"></span>
        <button class="big"><svg><use href="#plane"/></svg>基准平面</button>
        <span class="drop"></span>
        <button class="big"><svg><use href="#extrude"/></svg>拉伸</button>
        <span class="drop"></span>
        <button class="big"><svg><use href="#hole"/></svg>孔</button>
        <button class="big"><svg><use href="#thread"/></svg>螺纹</button>
        <span class="sep"></span>
        <button class="big"><svg><use href="#pattern"/></svg>阵列特征</button>
        <span class="drop"></span>
        <button class="big"><svg><use href="#unite"/></svg>求和</button>
        <span class="drop"></span>
        <button class="big"><svg><use href="#trim"/></svg>修剪体</button>
        <span class="drop"></span>
        <button class="big"><svg><use href="#shell"/></svg>抽壳</button>
        <span class="sep"></span>
        <button class="big"><svg><use href="#blend"/></svg>边倒圆</button>
        <span class="drop"></span>
        <button class="big"><svg><use href="#draft"/></svg>拔模</button>
        <span class="more"></span>
        <span class="grip edge"></span>
        <button class="big"><svg><use href="#offset"/></svg>偏置区域</button>
    </div>

    <div class="toolbar">
        <span class="grip"></span>
        <button class="tool" aria-label="对象"><svg><use href="#node"/></svg></button>
        <button class="tool" aria-label="图层"><svg><use href="#layers"/></svg></button>
        <button class="tool" aria-label="图层设置"><svg><use href="#layset"/></svg></button>
        <span class="sep"></span>
        <button class="tool" aria-label="属性"><svg><use href="#tag"/></svg></button>
        <span class="sep"></span>
        <button class="tool" aria-label="检查部件"><svg><use href="#chk1"/></svg></button>
        <button class="tool" aria-label="检查草图"><svg><use href="#chk2"/></svg></button>
        <button class="tool" aria-label="检查装配"><svg><use href="#chk3"/></svg></button>
        <span class="sep"></span>
        <button class="tool" aria-label="重命名">
            <svg viewBox="0 0 24 24">
                <use href="#gold" x="1" y="0" width="13" height="13"/>
                <path d="M13 13l8-9 2 2-8 9z" fill="#c84820" stroke="#5c2408"/>
                <path d="M1 14h16v9H1z" fill="#fff" stroke="#111"/>
                <text class="abc" x="2" y="21">ABC</text>
                <path d="M19 13l5 5-5 6z" fill="#a01cb0"/>
            </svg>
        </button>
        <span class="more"></span>
        <span class="grip edge"></span>
        <button class="tool" aria-label="折弯"><svg><use href="#cam1"/></svg></button>
        <button class="tool" aria-label="曲面"><svg><use href="#cam2"/></svg></button>
        <button class="tool" aria-label="选择"><svg><use href="#hand"/></svg></button>
        <span class="more"></span>
        <span class="grip edge"></span>
        <button class="tool" aria-label="圆柱压缩弹簧"><svg><use href="#spring1"/></svg></button>
        <button class="tool" aria-label="圆柱拉伸弹簧"><svg><use href="#spring2"/></svg></button>
        <button class="tool" aria-label="碟簧"><svg><use href="#spring3"/></svg></button>
        <span class="sep"></span>
        <button class="tool" aria-label="删除弹簧"><svg><use href="#spring4"/></svg></button>
        <span class="more"></span>
        <span class="gap gap-wide"></span>
        <span class="grip edge"></span>
        <button class="tool" aria-label="三角"><svg><use href="#tri"/></svg></button>
        <button class="tool" aria-label="表格"><svg><use href="#sheet"/></svg></button>
        <button class="tool" aria-label="点集"><svg><use href="#fold1"/></svg></button>
        <button class="tool" aria-label="圆集"><svg><use href="#fold2"/></svg></button>
        <span class="more"></span>
        <span class="gap gap-narrow"></span>
        <span class="grip edge"></span>
        <button class="tool" aria-label="锁定"><svg><use href="#lock"/></svg></button>
        <button class="tool" aria-label="解锁"><svg><use href="#lock"/></svg></button>
        <span class="more"></span>
        <span class="sep"></span>
    </div>

    <div class="ribbon display">
        <span class="grip"></span>
        <button class="tool" aria-label="检查"><svg><use href="#nav1"/></svg></button>
        <button class="tool" aria-label="结构"><svg><use href="#nav2"/></svg></button>
        <button class="tool" aria-label="报表"><svg><use href="#nav3"/></svg></button>
        <button class="tool" aria-label="坐标"><svg><use href="#nav4"/></svg></button>
        <span class="more"></span>
        <span class="gap gap-wide"></span>
        <span class="grip edge"></span>
        <button class="big"><svg><use href="#ball"/></svg>真实着色</button>
        <button class="big" disabled><svg><use href="#ball2"/></svg>光亮金属刷色</button>
        <span class="drop"></span>
        <button class="big" disabled><svg><use href="#ball3"/></svg>红色亮泽塑料</button>
        <span class="drop"></span>
        <button class="big" disabled><svg><use href="#sq1"/></svg>无全局反射图</button>
        <span class="drop"></span>
        <button class="big" disabled><svg><use href="#sq2"/></svg>渐变深灰色背景</button>
        <span class="drop"></span>
        <button class="big active"><svg><use href="#shadow"/></svg>显示阴影</button>
        <button class="big" disabled><svg><use href="#user"/></svg>显示地板反射</button>
        <button class="big" disabled><svg><use href="#grid"/></svg>显示地板栅格</button>
        <button class="big" disabled aria-label="地板"><svg><use href="#grid"/></svg></button>
    </div>

    <div class="selection">
        <div class="combo combo-filter">
            <select aria-label="类型过滤器"><option>没有选择过滤器</option></select>
        </div>
        <div class="combo">
            <select aria-label="选择范围"><option>整个装配</option></select>
        </div>
        <button class="small" aria-label="关联" disabled><svg><use href="#s-rel"/></svg></button>
        <span class="sep"></span>
        <button class="small" aria-label="重置过滤器" disabled><svg><use href="#s-undo"/></svg></button>
        <button class="small" aria-label="定位"><svg><use href="#s-target"/></svg></button>
        <button class="small" aria-label="查找"><svg><use href="#s-find"/></svg></button>
        <span class="sep"></span>
        <button class="small" aria-label="清除"><svg><use href="#s-eraser"/></svg></button>
        <button class="small" aria-label="体"><svg><use href="#s-box"/></svg></button>
        <span class="sep"></span>
        <button class="small on" aria-label="端点"><svg><use href="#s-end"/></svg></button>
        <button class="small on" aria-label="中点"><svg><use href="#s-mid"/></svg></button>
        <button class="small" aria-label="控制点"><svg><use href="#s-curve"/></svg></button>
        <button class="small" aria-label="交点"><svg><use href="#s-cross"/></svg></button>
        <button class="small on" aria-label="圆心"><svg><use href="#s-center"/></svg></button>
        <button class="small" aria-label="象限点"><svg><use href="#s-quad"/></svg></button>
        <button class="small on" aria-label="现有点"><svg><use href="#s-point"/></svg></button>
        <button class="small on" aria-label="曲线上的点"><svg><use href="#s-on"/></svg></button>
        <button class="small" aria-label="面上的点"><svg><use href="#s-face"/></svg></button>
        <span class="sep"></span>
        <button class="small" aria-label="栅格点"><svg><use href="#s-grid"/></svg></button>
    </div>

    <div class="status">
        <div class="prompt"></div>
        <div class="message">体(0) 已选定</div>
    </div>

    <main class="work">
        <div class="tabs">
            <button class="tab" aria-label="装配导航器"><svg><use href="#t-asm"/></svg></button>
            <button class="tab" aria-label="约束导航器"><svg><use href="#t-con"/></svg></button>
            <button class="tab current" aria-label="部件导航器"><svg><use href="#t-part"/></svg></button>
            <button class="tab" aria-label="重用库"><svg><use href="#t-books"/></svg></button>
            <button class="tab apart" aria-label="HD3D"><svg><use href="#t-info"/></svg></button>
            <button class="tab apart" aria-label="浏览器"><svg><use href="#t-web"/></svg></button>
            <button class="tab apart" aria-label="历史记录"><svg><use href="#t-clock"/></svg></button>
            <button class="tab" aria-label="角色"><svg><use href="#t-role"/></svg></button>
            <button class="tab" aria-label="系统可视化"><svg><use href="#t-vis"/></svg></button>
            <div class="tear"></div>
            <div class="pager">
                <button disabled aria-label="最前"><svg viewBox="0 0 14 14"><path d="M2 3h10M2 11h10M7 4l4 5H3z"/></svg></button>
                <button disabled aria-label="向前"><svg viewBox="0 0 14 14"><path d="M7 5l3 4H4z"/></svg></button>
                <button aria-label="向后"><svg viewBox="0 0 14 14"><path d="M7 9L4 5h6z"/></svg></button>
                <button aria-label="最后"><svg viewBox="0 0 14 14"><path d="M2 3h10M2 11h10M7 8L4 4h6z"/></svg></button>
            </div>
        </div>

        <aside class="navigator">
            <h1><svg><use href="#n-pin"/></svg>部件导航器</h1>
            <div class="tree-box">
                <div class="tree-view">
                    <table class="tree">
                        <thead>
                            <tr><th>名称<i class="sort"></i></th><th>附注</th></tr>
                        </thead>
                        <tbody>
                            <tr class="root"><td><div class="cell"><span class="fold"></span><svg><use href="#n-folder"/></svg>模型历史记录</div></td><td></td></tr>
                            <tr class="selected"><td><div class="cell"><input type="checkbox" id="f0" checked><svg><use href="#n-body"/></svg><label for="f0">体 (0)</label></div></td><td></td></tr>
                            <tr><td><div class="cell"><input type="checkbox" id="f1" checked><svg><use href="#n-body"/></svg><label for="f1">体 (1)</label></div></td><td></td></tr>
                            <tr><td><div class="cell"><input type="checkbox" id="f2" checked><svg><use href="#n-body"/></svg><label for="f2">体 (2)</label></div></td><td></td></tr>
                            <tr><td><div class="cell"><input type="checkbox" id="f3" checked><svg><use href="#n-body"/></svg><label for="f3">体 (3)</label></div></td><td></td></tr>
                            <tr><td><div class="cell"><input type="checkbox" id="f4" checked><svg><use href="#cube"/></svg><label for="f4">块 (4)</label></div></td><td></td></tr>
                            <tr><td><div class="cell"><input type="checkbox" id="f5" checked><svg><use href="#cube"/></svg><label for="f5">块 (5)</label></div></td><td></td></tr>
                            <tr><td><div class="cell"><input type="checkbox" id="f6" checked><svg><use href="#cube"/></svg><label for="f6">块 (6)</label></div></td><td></td></tr>
                            <tr><td><div class="cell"><input type="checkbox" id="f7" checked><svg><use href="#minus"/></svg><label for="f7">求差 (7)</label></div></td><td></td></tr>
                            <tr><td><div class="cell"><input type="checkbox" id="f8" checked><svg><use href="#minus"/></svg><label for="f8">求差 (8)</label></div></td><td></td></tr>
                            <tr><td><div class="cell"><input type="checkbox" id="f9" checked><svg><use href="#n-cyl"/></svg><label for="f9">圆柱 (9)</label></div></td><td></td></tr>
                            <tr><td><div class="cell"><input type="checkbox" id="f10" checked><svg><use href="#n-cyl"/></svg><label for="f10">圆柱 (10)</label></div></td><td></td></tr>
                            <tr><td><div class="cell"><input type="checkbox" id="f11" checked><svg><use href="#unite"/></svg><label for="f11">求和 (11)</label></div></td><td></td></tr>
                            <tr><td><div class="cell"><input type="checkbox" id="f12" checked><svg><use href="#n-cyl"/></svg><label for="f12">圆柱 (12)</label></div></td><td></td></tr>
                            <tr><td><div class="cell"><input type="checkbox" id="f13" checked><svg><use href="#n-cyl"/></svg><label for="f13">圆柱 (13)</label></div></td><td></td></tr>
                            <tr><td><div class="cell"><input type="checkbox" id="f14" checked><svg><use href="#n-cyl"/></svg><label for="f14">圆柱 (14)</label></div></td><td></td></tr>
                            <tr><td><div class="cell"><input type="checkbox" id="f15" checked><svg><use href="#unite"/></svg><label for="f15">求和 (15)</label></div></td><td></td></tr>
                            <tr><td><div class="cell"><input type="checkbox" id="f16" checked><svg><use href="#minus"/></svg><label for="f16">求差 (16)</label></div></td><td></td></tr>
                        </tbody>
                    </table>
                    <div class="vscroll">
                        <i class="up"></i>
                        <span class="vthumb"></span>
                        <i class="down"></i>
                    </div>
                </div>
                <div class="hscroll">
                    <i class="left"></i>
                    <span class="hthumb"></span>
                    <i class="right"></i>
                </div>
            </div>
            <div class="splitter"></div>
            <div class="sections">
                <button class="section">相依性<svg viewBox="0 0 14 14"><path d="M2 2l5 9 5-9"/></svg></button>
                <button class="section">细节<svg viewBox="0 0 14 14"><path d="M2 2l5 9 5-9"/></svg></button>
                <button class="section">预览<svg viewBox="0 0 14 14"><path d="M2 2l5 9 5-9"/></svg></button>
            </div>
        </aside>

        <section class="viewport">
            <svg class="model" viewBox="359 285 619 506" preserveAspectRatio="xMidYMid meet" stroke-linejoin="round">
                <!-- base plate -->
                <g stroke="#000" stroke-width="1.500">
                    <path d="M373 672l30-14 221 99 227-121 19 7-227 122z" fill="#fff"/>
                    <path d="M373 672l270 93v21l-270-92z" fill="#b3b4b3"/>
                    <path d="M643 765l227-122v21L643 786z" fill="#d9d9d7"/>
                </g>
                <!-- spacer blocks and ejector plates -->
                <path d="M434 600l144 50v92l-142-48z" fill="#fff"/>
                <path d="M435 613l18 6v21l-16 9z" fill="#dcdcd8" stroke="#000"/>
                <path d="M452 616v30q2 6 16 7 20-1 25-10v-18z" fill="#2629b4" stroke="#0c0c4c"/>
                <path d="M452 622q20 10 41 3M452 627q20 10 41 3M452 632q20 10 41 3M452 637q20 10 41 3M452 642q20 10 40 1M454 648q18 6 36-2" fill="none" stroke="#090938" stroke-width="2"/>
                <path d="M556 652v32q4 7 22 8v-40z" fill="#2629b4" stroke="#0c0c4c"/>
                <path d="M556 658q9 5 21 4M556 663q9 5 21 4M556 668q9 5 21 4M556 673q9 5 21 4M556 678q9 5 21 4M557 683q9 5 20 4" fill="none" stroke="#090938" stroke-width="2"/>
                <g stroke="#000" stroke-width="1.500">
                    <path d="M437 649l140 46v19l-140-45z" fill="#818997"/>
                    <path d="M437 669l140 45v24l-140-46z" fill="#aa8d97"/>
                    <path d="M437 692l141 48" stroke-width="2"/>
                    <path d="M389 597l45 15 2 83-46-16z" fill="#abacaa"/>
                    <path d="M578 661l44 15 2 81-46-15z" fill="#a7a8a6"/>
                    <path d="M622 676l227-122 2 82-227 121z" fill="#d8d8d6"/>
                    <path d="M437 649v44M577 695v45" stroke-width="3"/>
                </g>
                <!-- cavity and core plates -->
                <g stroke="#000" stroke-width="1.500">
                    <path d="M388 534l232 78 2 64-233-79z" fill="#ae5e63"/>
                    <path d="M620 612l227-121 2 63-227 122z" fill="#d8767a"/>
                    <path d="M386 455l232 80 2 77-232-78z" fill="#6389b0"/>
                    <path d="M618 535l227-110 2 66-227 121z" fill="#80acda"/>
                    <path d="M388 534l232 78 227-121" fill="none" stroke-width="3"/>
                </g>
                <!-- top clamping plate -->
                <g stroke="#000" stroke-width="1.500">
                    <path d="M593 307l270 92-226 122-271-91z" fill="#fff"/>
                    <path d="M366 430l271 91v24l-271-92z" fill="#abacab"/>
                    <path d="M637 521l226-122v23L637 545z" fill="#d9d9d7"/>
                </g>
                <!-- locating ring -->
                <g stroke="#000" stroke-width="2">
                    <path d="M563 405v10q4 20 51 21 47-1 51-21v-10z" fill="#0e7d62"/>
                    <ellipse cx="614" cy="405" rx="51" ry="22" fill="#17b08c"/>
                    <ellipse cx="614" cy="405" rx="36" ry="16" fill="#0b7259"/>
                    <path d="M581 411q9-8 33-8t33 8q-8 9-33 9t-33-9z" fill="#fff" stroke-width="1"/>
                    <ellipse cx="581" cy="394" rx="4" ry="2"/>
                    <ellipse cx="647" cy="416" rx="4" ry="2"/>
                </g>
                <!-- cap screws -->
                <g fill="#21b52b" stroke="#000" stroke-width="2">
                    <ellipse cx="582" cy="350" rx="11" ry="5"/><ellipse cx="582" cy="350" rx="6" ry="3"/><path d="M580 349h4v2h-4z"/>
                    <ellipse cx="521" cy="383" rx="11" ry="5"/><ellipse cx="521" cy="383" rx="6" ry="3"/><path d="M519 382h4v2h-4z"/>
                    <ellipse cx="460" cy="416" rx="11" ry="5"/><ellipse cx="460" cy="416" rx="6" ry="3"/><path d="M458 415h4v2h-4z"/>
                    <ellipse cx="768" cy="413" rx="11" ry="5"/><ellipse cx="768" cy="413" rx="6" ry="3"/><path d="M766 412h4v2h-4z"/>
                    <ellipse cx="707" cy="446" rx="11" ry="5"/><ellipse cx="707" cy="446" rx="6" ry="3"/><path d="M705 445h4v2h-4z"/>
                </g>
                <path d="M638 477l10-2 9 2-1 5-6 2z" fill="#21b52b" stroke="#000" stroke-width="2"/>
                <!-- cooling holes -->
                <ellipse cx="502" cy="535" rx="6" ry="7.500" fill="#bfe4f6" stroke="#000" stroke-width="2" transform="rotate(-20 502 535)"/>
                <ellipse cx="504" cy="604" rx="6" ry="7.500" fill="#f6b8b8" stroke="#000" stroke-width="2" transform="rotate(-20 504 604)"/>
                <path d="M459 560v-12q14-6 32-4l13 6 17 12v11l20 7v7z" fill="none" stroke="#1eea1e" stroke-width="2"/>
                <path d="M499 549v24" stroke="#e01414" stroke-width="2" stroke-dasharray="8 3"/>
                <!-- work coordinate system -->
                <path d="M616 461v45" stroke="#5c82d8" stroke-width="2"/>
                <path d="M574 496q10 0 39 14-26-4-39-14z" fill="#e69a9e"/>
                <path d="M582 529q10-10 31-16-15 12-31 16z" fill="#8cd894"/>
                <g class="axis">
                    <text x="619" y="458" fill="#2156d8">ZC</text>
                    <text x="574" y="492" fill="#cc3038">XC</text>
                    <text x="582" y="542" fill="#3c9a4a">YC</text>
                </g>
                <!-- highlighted body -->
                <g fill="none" stroke="#f2a050" stroke-width="4">
                    <path d="M603 473q4-6 12-9l31-11 22 5 24 14v16"/>
                    <path d="M603 473l20 2 15 4 14 13 40-20M646 453l1 19 60 18M652 492v18"/>
                    <path d="M612 477q-9 4-9 9 1 6 7 9l47 17 15 4 35-18v-9l-15-8"/>
                    <path d="M653 501l15 6 38-17M668 507v8"/>
                </g>
                <!-- view triad -->
                <path d="M377 729l12-7 15 5v15l-13 7-14-5z" fill="#a5a5a5" stroke="#cfcfcf"/>
                <path d="M377 729l14 5 13-7M391 734v15" fill="none" stroke="#d6d6d6"/>
                <path d="M403 743l-27-9" stroke="#e09a9a"/>
                <path d="M403 743v-25" stroke="#1c4ce0" stroke-width="3"/>
                <path d="M403 743l-20 11" stroke="#2c9a34" stroke-width="3"/>
                <circle cx="404" cy="743" r="4" fill="#dcdcdc"/>
                <g class="triad">
                    <text x="400" y="716" fill="#2458e8">Z</text>
                    <text x="373" y="739" fill="#d83030">X</text>
                    <text x="377" y="761" fill="#2ca03a">Y</text>
                </g>
            </svg>
        </section>
    </main>

    <div class="toolbar sketch">
        <span class="grip edge"></span>
        <button class="tool" aria-label="任务环境中的草图"><svg><use href="#b-task"/></svg></button>
        <button class="tool finish" disabled><svg><use href="#b-finish"/></svg>完成草图</button>
        <button class="tool" aria-label="轮廓"><svg><use href="#b-profile"/></svg></button>
        <button class="tool" aria-label="直线"><svg><use href="#b-line"/></svg></button>
        <button class="tool" aria-label="圆弧"><svg><use href="#b-arc"/></svg></button>
        <button class="tool" aria-label="圆"><svg><use href="#b-circle"/></svg></button>
        <button class="tool" aria-label="圆角" disabled><svg><use href="#b-fillet"/></svg></button>
        <button class="tool" aria-label="倒斜角" disabled><svg><use href="#b-chamfer"/></svg></button>
        <button class="tool" aria-label="矩形"><svg><use href="#b-rect"/></svg></button>
        <button class="tool" aria-label="艺术样条"><svg><use href="#b-spline"/></svg></button>
        <button class="tool" aria-label="点"><svg><use href="#b-point"/></svg></button>
        <button class="tool" aria-label="偏置曲线" disabled><svg><use href="#b-offset"/></svg></button>
        <span class="drop"></span>
        <span class="sep"></span>
        <button class="tool" aria-label="快速修剪" disabled><svg><use href="#b-trim"/></svg></button>
        <button class="tool" aria-label="快速延伸" disabled><svg><use href="#b-extend"/></svg></button>
        <span class="sep"></span>
        <button class="tool" aria-label="自动判断尺寸" disabled><svg><use href="#b-dim"/></svg></button>
        <span class="drop"></span>
        <span class="sep"></span>
        <button class="tool" aria-label="约束" disabled><svg><use href="#b-para"/></svg></button>
        <button class="tool" aria-label="显示约束" disabled><svg><use href="#b-show"/></svg></button>
        <span class="drop"></span>
        <span class="more"></span>
    </div>
</body>
</html>
```
FILE: styles.css
```
* {
    box-sizing: border-box;
}
body {
    margin: 0;
    height: 100vh;
    display: flex;
    flex-direction: column;
    overflow: hidden;
    border-left: 1px solid #111;
    border-bottom: 4px solid #262826;
    background: #dcdddb;
    color: #000;
    font-family: "Noto Sans", "Noto Sans CJK SC", sans-serif;
    font-size: 12px;
    line-height: 16px;
}
button, select {
    font: inherit;
    color: inherit;
    padding: 0;
    margin: 0;
    border: none;
    background: none;
    cursor: pointer;
}
button:disabled {
    color: #969794;
    cursor: default;
}
.sprite {
    position: absolute;
    width: 0;
    height: 0;
}

/* menu */
.menubar {
    display: flex;
    align-items: center;
    flex: none;
    height: 27px;
    background: linear-gradient(#e6e7e5, #dcdddb);
    border-top: 1px solid #9c9e9c;
    border-bottom: 1px solid #b8bab8;
    white-space: nowrap;
}
.menubar a {
    color: #000;
    text-decoration: none;
    margin-right: 12px;
}
.logo {
    width: 16px;
    height: 16px;
    margin-right: 6px;
}

/* toolbars */
.toolbar, .ribbon, .selection {
    display: flex;
    flex: none;
    overflow: hidden;
    white-space: nowrap;
}
.toolbar {
    height: 34px;
    background: linear-gradient(#e3e4e2, #d5d6d4);
    border-top: 1px solid #f4f4f3;
    border-bottom: 1px solid #b4b6b4;
}
.grip {
    flex: none;
    width: 8px;
    margin: 4px 0;
    align-self: stretch;
    background: repeating-linear-gradient(#a4a6a4 0 2px, transparent 2px 4px) 4px 0 / 2px 100% no-repeat;
}
.edge {
    width: 9px;
    margin: 0;
    border-left: 1px solid #a8aaa8;
    box-shadow: inset 1px 0 #f6f6f5;
}
.sep {
    flex: none;
    width: 6px;
    background: linear-gradient(90deg, #acaeac 50%, #f8f8f7 50%) 2px 0 / 2px 100% no-repeat;
}
.tool {
    display: flex;
    align-items: center;
    justify-content: center;
    flex: none;
    width: 31px;
}
.tool svg {
    width: 24px;
    height: 24px;
    flex: none;
}
.toolbar .tool svg {
    width: 22px;
    height: 22px;
}
.abc {
    font-family: "Liberation Sans", sans-serif;
    font-size: 7px;
    font-weight: bold;
}
.start {
    width: 68px;
    gap: 5px;
}
.finder {
    width: 92px;
    gap: 5px;
}
.finish {
    width: 82px;
    gap: 4px;
}
.toolbar .finish svg {
    width: 24px;
    height: 24px;
}
.drop, .more {
    display: flex;
    flex: none;
    width: 12px;
    justify-content: center;
    align-items: center;
}
.more {
    align-items: flex-end;
    padding-bottom: 7px;
}
.drop::after, .more::after, .arrow {
    content: "";
    border: 3px solid transparent;
    border-top-color: #000;
    border-bottom: none;
}
.gap {
    flex: none;
    border-left: 1px solid #bcbebc;
    background: #d8d9d7;
}
.gap-wide {
    width: 96px;
}
.gap-narrow {
    width: 32px;
}

.ribbon {
    height: 68px;
    background: linear-gradient(#e1e2e0, #d6d7d5);
    border-top: 1px solid #f4f4f3;
    border-bottom: 1px solid #acaeac;
}
.big {
    display: flex;
    flex-direction: column;
    align-items: center;
    flex: none;
    width: 80px;
    padding: 4px 2px 0;
    gap: 5px;
    white-space: normal;
}
.big svg {
    width: 24px;
    height: 24px;
    flex: none;
}
.ribbon .more {
    padding-bottom: 5px;
}
.display {
    height: 69px;
    background: linear-gradient(#cfd0ce, #c9cac8);
    border-bottom: 2px solid #989a98;
}
.display .big {
    line-height: 15px;
}
.display .active {
    margin: 1px 0;
    padding: 3px 2px 0;
    background: #fff;
    border: 1px solid #555;
    border-radius: 2px;
}
.display .gap {
    width: 103px;
    background: #cbccca;
}

/* selection bar */
.selection {
    height: 30px;
    align-items: center;
    padding-left: 6px;
    background: linear-gradient(#c8c9c7, #dcdddb);
}
.selection .sep {
    align-self: stretch;
    margin: 2px 0;
}
.combo {
    position: relative;
    flex: none;
    width: 150px;
    height: 20px;
    margin-right: 4px;
    background: #fff;
    border: 1px solid #444c54;
    border-radius: 2px;
}
.combo-filter {
    width: 142px;
    margin-right: 9px;
}
.combo select {
    appearance: none;
    display: block;
    width: 100%;
    height: 18px;
    line-height: 18px;
    background: linear-gradient(#a8dcf6, #58aee0) right / 17px 100% no-repeat;
}
.combo::after {
    content: "";
    position: absolute;
    right: 4px;
    top: 6px;
    border: 5px solid transparent;
    border-top: 7px solid #101820;
    border-bottom: none;
    pointer-events: none;
}
.small {
    display: flex;
    align-items: center;
    justify-content: center;
    flex: none;
    width: 23px;
    height: 22px;
}
.small svg {
    width: 18px;
    height: 18px;
    flex: none;
}
.small.on {
    background: #fff;
    border: 1px solid #555;
    border-radius: 2px;
}

/* status line */
.status {
    display: flex;
    flex: none;
    height: 23px;
    align-items: stretch;
    border-top: 1px solid #b8bab8;
    background: #dcdddb;
}
.prompt {
    width: 62.3%;
    border-right: 1px solid #fff;
}
.message {
    padding: 2px;
    font-size: 13px;
    font-weight: bold;
}

/* working area */
.work {
    display: flex;
    flex: 1;
    min-height: 0;
}
.tabs {
    display: flex;
    flex-direction: column;
    align-items: flex-end;
    flex: none;
    width: 33px;
    padding-top: 16px;
    border-right: 1px solid #777;
    background: linear-gradient(90deg, #8c8e8c, #a8aaa8);
}
.tab {
    display: flex;
    align-items: center;
    justify-content: center;
    flex: none;
    width: 26px;
    height: 40px;
    margin-bottom: 2px;
    background: linear-gradient(90deg, #e4e5e3, #cbccca);
    border: 1px solid #6c6e6c;
    border-right: none;
    border-radius: 3px 0 0 3px;
}
.tab svg {
    width: 24px;
    height: 24px;
    flex: none;
}
.tab.current {
    width: 28px;
    height: 42px;
    background: #ececea;
}
.tab.apart {
    margin-top: 11px;
}
.tear {
    flex: none;
    width: 28px;
    height: 6px;
    border: 1px solid #666;
    border-right: none;
    border-radius: 3px 0 0 8px;
    background: #c4c5c3;
}
.pager {
    display: flex;
    flex-direction: column;
    margin: 2px 7px 0 0;
}
.pager button {
    width: 16px;
    height: 16px;
    background: #dcdddb;
    border: 1px solid #868886;
}
.pager svg {
    display: block;
    width: 14px;
    height: 14px;
    fill: #444;
    stroke: #444;
}
.pager button:disabled svg {
    fill: #aaa;
    stroke: #aaa;
}

.navigator {
    display: flex;
    flex-direction: column;
    flex: none;
    width: 325px;
    padding: 5px 9px 5px 9px;
    background: #ebebea;
    border-right: 2px solid #6f716f;
}
.navigator h1 {
    display: flex;
    align-items: center;
    gap: 13px;
    margin: 0;
    padding: 0 6px 6px;
    font-size: 13px;
    line-height: 20px;
}
.navigator h1 svg {
    width: 11px;
    height: 11px;
}
.tree-box {
    display: flex;
    flex-direction: column;
    flex: 1;
    min-height: 0;
    border: 1px solid #6a6c6a;
    background: #f4f4f3;
}
.tree-view {
    display: grid;
    grid-template-columns: 1fr 17px;
    flex: 1;
    min-height: 0;
    overflow: hidden;
    background: linear-gradient(#ececea, #cccdcb) top / 100% 19px no-repeat, #fff;
}
.tree {
    border-collapse: collapse;
    table-layout: fixed;
    width: 100%;
    height: max-content;
    color: #333;
}
.tree th {
    height: 19px;
    padding: 0 7px;
    font-weight: normal;
    text-align: left;
    line-height: 18px;
    border-bottom: 1px solid #8a8c8a;
}
.tree th:first-child {
    width: 70%;
}
.tree th + th, .tree td + td {
    border-left: 1px solid #cfd0ce;
    padding-left: 5px;
}
.sort {
    display: inline-block;
    margin-left: 16px;
    vertical-align: 3px;
    border: 5px solid transparent;
    border-bottom-color: #111;
    border-top: none;
}
.tree td {
    height: 20px;
    padding: 0;
    border-bottom: 1px solid #dadbd9;
}
.tree tr:nth-child(even) td {
    background: #f3f4f2;
}
.cell {
    display: flex;
    align-items: center;
    height: 19px;
    margin-left: 29px;
    padding-left: 11px;
    border-left: 1px dotted #999;
    background: linear-gradient(#bbb, #bbb) 2px 9px / 7px 1px no-repeat;
}
.root .cell {
    margin-left: 0;
    padding-left: 5px;
    border-left: none;
    background: none;
}
.cell svg {
    flex: none;
    width: 16px;
    height: 16px;
    margin: 0 1px 0 2px;
}
.root .cell svg {
    margin-right: 2px;
}
.cell label {
    flex: 1;
    padding-left: 1px;
}
.fold {
    display: flex;
    width: 9px;
    height: 9px;
    margin-right: 4px;
    border: 1px solid #9a9c9a;
}
.fold::before {
    content: "";
    width: 5px;
    height: 1px;
    margin: 3px 1px;
    background: #333;
}
.cell input {
    appearance: none;
    display: flex;
    justify-content: center;
    flex: none;
    width: 13px;
    height: 13px;
    margin: 0;
    border: 1px solid #111;
    background: #fff;
}
.cell input:checked::before {
    content: "";
    box-sizing: border-box;
    width: 6px;
    height: 10px;
    border: solid #12b32c;
    border-width: 0 2px 2px 0;
    transform: rotate(40deg);
}
.tree .selected label {
    background: #2f90f0;
    color: #fff;
    line-height: 19px;
}
.tree .selected td + td {
    background: #2f90f0;
}
.vscroll {
    display: flex;
    flex-direction: column;
    align-items: center;
    margin-top: 19px;
    padding: 7px 0 7px;
    background: #f0f0ef;
    border-top: 1px solid #8a8c8a;
}
.vthumb {
    width: 14px;
    height: 15px;
    margin: 9px 0 auto;
    background: linear-gradient(90deg, #eee, #ccc);
    border: 1px solid #a4a6a4;
}
.up, .down, .left, .right {
    border: 3px solid transparent;
}
.up {
    border-bottom-color: #222;
    border-top: none;
}
.down {
    border-top-color: #222;
    border-bottom: none;
}
.left {
    border-right-color: #222;
}
.right {
    border-left-color: #222;
}
.hscroll {
    display: flex;
    align-items: center;
    flex: none;
    height: 17px;
    padding-left: 4px;
    background: #e8e8e7;
}
.hthumb {
    width: 78%;
    height: 14px;
    margin: 0 22px 0 9px;
    border: 1px solid #989a98;
    background: repeating-linear-gradient(90deg, #666 0 1px, transparent 1px 3px) center / 9px 6px no-repeat, linear-gradient(#ececea, #c6c7c5);
}
.splitter {
    flex: none;
    height: 5px;
    width: 53px;
    margin: 3px auto 4px;
    background: #d0d1cf;
    border-bottom: 1px solid #a4a6a4;
}
.sections {
    flex: none;
}
.section {
    display: flex;
    align-items: center;
    justify-content: space-between;
    width: 100%;
    height: 23px;
    padding: 0 4px 0 7px;
    font-size: 13px;
    font-weight: bold;
    background: linear-gradient(#a4a6a4, #a4a6a4) right 22px top / 1px 100% no-repeat, linear-gradient(#f2f2f1, #cfd0ce);
    border-right: 1px solid #8a8c8a;
    border-bottom: 1px solid #9a9c9a;
}
.section svg {
    width: 14px;
    height: 14px;
    fill: none;
    stroke: #666;
    stroke-width: 3;
}

.viewport {
    flex: 1;
    min-width: 0;
    background: #000;
}
.model {
    display: block;
    width: 100%;
    height: 100%;
}
.axis, .triad {
    font-family: "Liberation Sans", sans-serif;
    font-size: 13px;
}
.triad {
    font-size: 11px;
}

.sketch {
    height: 35px;
    padding-left: 150px;
}
.sketch .more {
    padding-bottom: 4px;
}
```
